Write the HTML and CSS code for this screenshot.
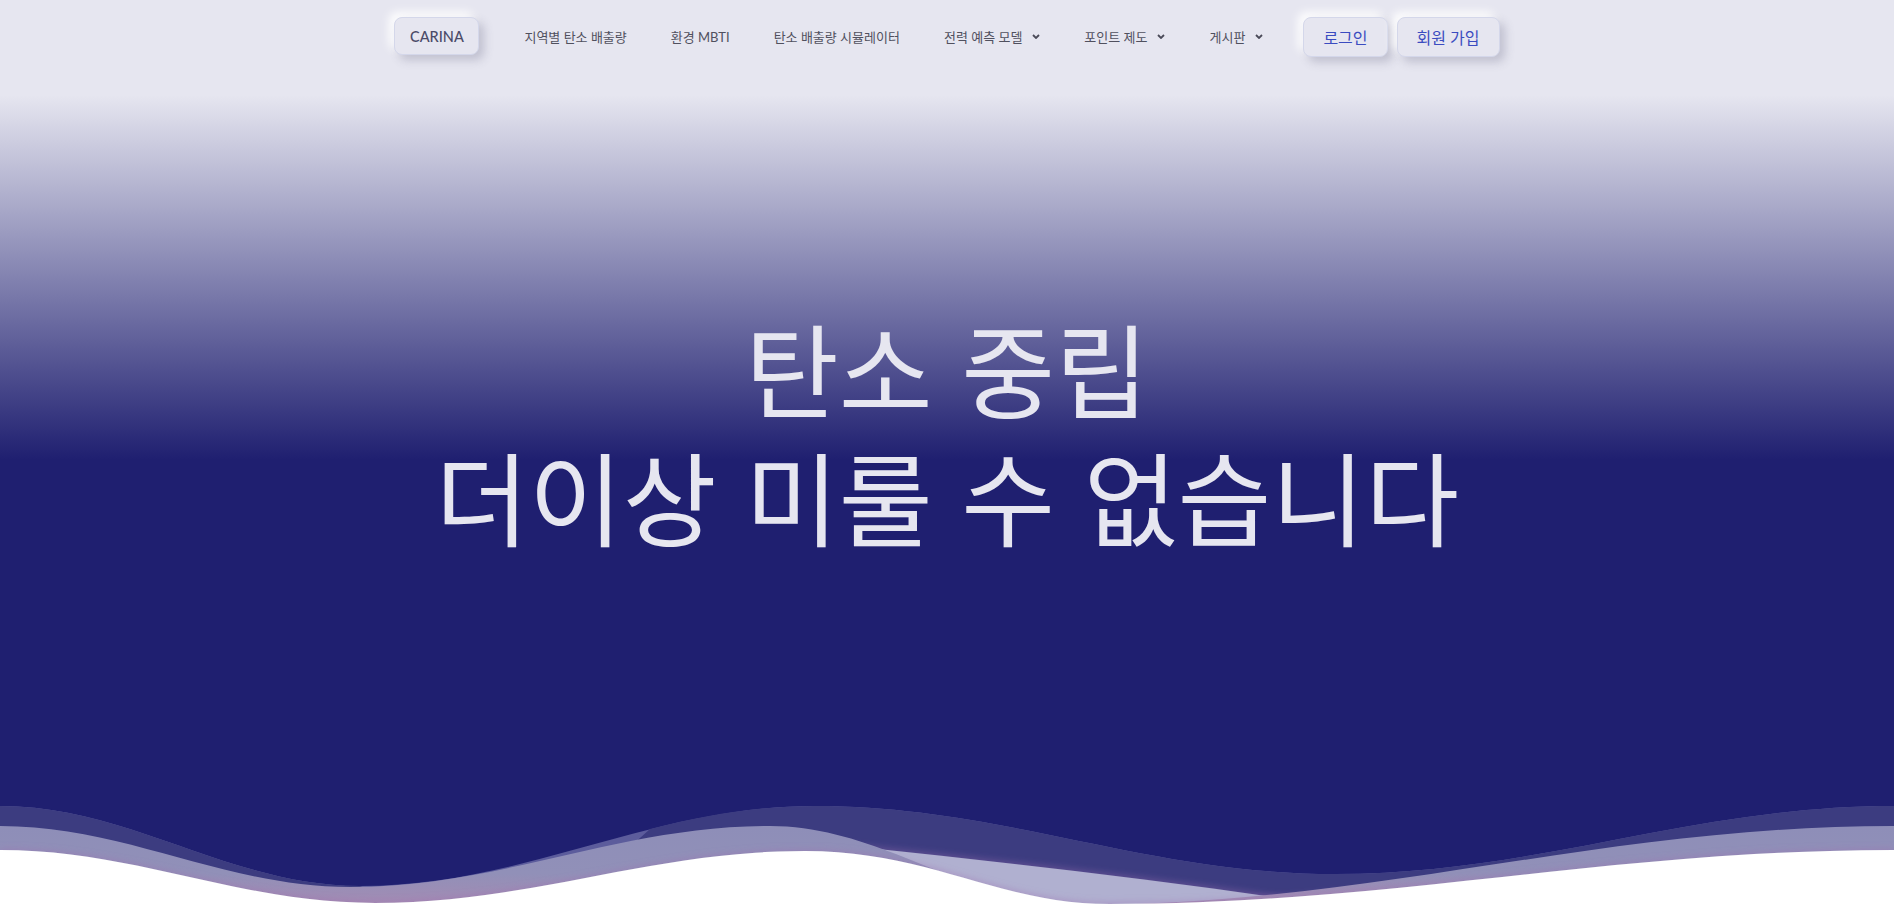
FILE: index.html
```html
<!DOCTYPE html>
<html lang="ko">
<head>
    <meta charset="UTF-8">
    <meta name="viewport" content="width=device-width, initial-scale=1.0">
    <title>CARINA - 탄소 중립</title>
    <link rel="stylesheet" href="styles.css">
</head>
<body>
    <div class="hero">
        <header class="topbar">
            <nav class="nav">
                <a href="#" class="btn brand">CARINA</a>
                <ul class="menu">
                    <li><a href="#">지역별 탄소 배출량</a></li>
                    <li><a href="#">환경 MBTI</a></li>
                    <li><a href="#">탄소 배출량 시뮬레이터</a></li>
                    <li class="dropdown"><a href="#">전력 예측 모델 <svg class="caret" width="8" height="5" viewBox="0 0 8 5"><path d="M1 1l3 3 3-3"/></svg></a></li>
                    <li class="dropdown"><a href="#">포인트 제도 <svg class="caret" width="8" height="5" viewBox="0 0 8 5"><path d="M1 1l3 3 3-3"/></svg></a></li>
                    <li class="dropdown"><a href="#">게시판 <svg class="caret" width="8" height="5" viewBox="0 0 8 5"><path d="M1 1l3 3 3-3"/></svg></a></li>
                </ul>
                <div class="auth">
                    <a href="#" class="btn auth-btn">로그인</a>
                    <a href="#" class="btn auth-btn">회원 가입</a>
                </div>
            </nav>
        </header>

        <section class="hero-text">
            <h1><span class="line">탄소 중립</span><span class="line">더이상 미룰 수 없습니다</span></h1>
        </section>

        <svg class="waves" viewBox="0 0 1894 127" preserveAspectRatio="none">
            <defs>
                <linearGradient id="bandGrad" x1="0" y1="46" x2="0" y2="125" gradientUnits="userSpaceOnUse">
                    <stop offset="0" stop-color="#8e8eb8"/>
                    <stop offset="0.6" stop-color="#9190b8"/>
                    <stop offset="1" stop-color="#a48bb3"/>
                </linearGradient>
                <filter id="glow" x="-5%" y="-50%" width="110%" height="200%">
                    <feDropShadow dx="0" dy="-2" stdDeviation="3" flood-color="#a070b0" flood-opacity="0.35"/>
                </filter>
            </defs>
            <!-- back band -->
            <path fill="#5c5c9c" d="M0,26 C131,26 229,106 360,106 C526,106 649,26 815,26 C1004,26 1146,94 1335,94 C1539,94 1690,26 1894,26 L1894,127 L0,127 Z"/>
            <path fill="#3c3c80" d="M0,26 C131,26 229,106 360,106 L420,130 L560,130 L650,49 C710,34 760,26 815,26 C1004,26 1146,94 1335,94 C1539,94 1690,26 1894,26 L1894,127 L0,127 Z"/>
            <path fill="#b0b0d0" filter="url(#glow)" d="M780,127 L850,66 C1000,82 1150,98 1300,121 L1300,127 Z"/>
            <path fill="url(#bandGrad)" d="M0,46 C127,46 223,107 350,107 C503,107 617,46 770,46 C883,46 967,125 1080,125 C1376,125 1598,46 1894,46 L1894,127 L0,127 Z"/>
            <!-- front -->
            <path fill="#ffffff" filter="url(#glow)" d="M0,70 C137,70 238,123 375,123 C532,123 648,71 805,71 C930,71 999,124 1110,124 C1396,124 1608,70 1894,70 L1894,130 L0,130 Z"/>
        </svg>
    </div>
</body>
</html>
```

FILE: styles.css
```css
body {
    margin: 0;
    background-color: #fff;
    font-family: Lato, "Noto Sans CJK KR", sans-serif;
}
a {
    text-decoration: none;
}
.hero {
    height: 907px;
    display: flex;
    flex-direction: column;
    background: linear-gradient(180deg, #e6e6f0 0, #e6e6f0 95px, #1f1f70 460px, #1f1f70 100%);
}
.topbar {
    height: 72px;
}
.nav {
    height: 72px;
    display: flex;
    align-items: center;
    justify-content: center;
}
.btn {
    display: flex;
    align-items: center;
    justify-content: center;
    box-sizing: border-box;
    background-color: #e6e6f0;
    border: 1px solid #d4d7ea;
    border-radius: 8px;
    box-shadow: 5px 5px 10px rgba(80, 80, 110, 0.25), -5px -5px 10px rgba(255, 255, 255, 0.95);
}
.brand {
    width: 85px;
    height: 38px;
    font-size: 14.5px;
    font-weight: 500;
    color: #4b4b68;
}
.menu {
    list-style: none;
    margin: 0 0 0 45px;
    padding: 0;
    display: flex;
    align-items: center;
    gap: 44px;
}
.menu a {
    display: flex;
    align-items: center;
    font-size: 13px;
    color: #50505e;
}
.caret {
    margin-left: 10px;
}
.caret path {
    fill: none;
    stroke: #4a4a58;
    stroke-width: 1.8;
}
.auth {
    display: flex;
    gap: 9px;
    margin-left: 40px;
    padding-top: 2px;
}
.auth-btn {
    height: 40px;
    padding: 0 19px;
    font-size: 16px;
    color: #3b4cc0;
}
.hero-text {
    flex: 1;
    display: flex;
    align-items: center;
    justify-content: center;
    padding-top: 10px;
}
.hero-text h1 {
    margin: 0;
    font-family: "Noto Sans CJK KR", sans-serif;
    font-size: 102px;
    line-height: 128px;
    font-weight: 400;
    color: #e6e6f0;
    text-align: center;
}
.line {
    display: block;
    height: 128px;
}
.waves {
    display: block;
    width: 100%;
    height: 127px;
}
```
